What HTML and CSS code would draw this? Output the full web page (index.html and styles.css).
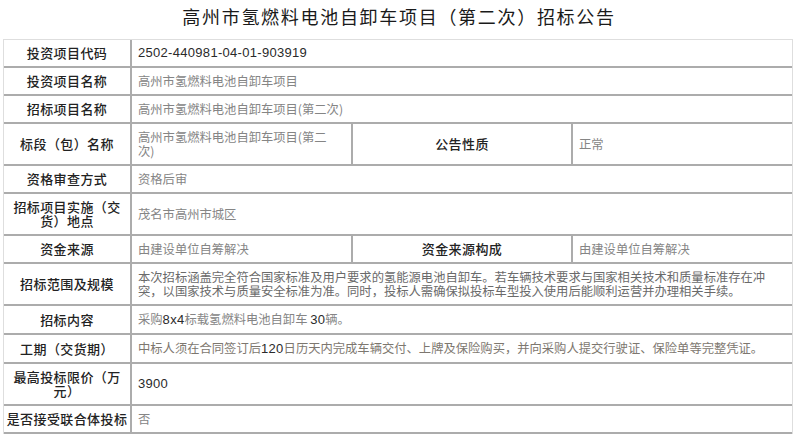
FILE: index.html
```html
<!DOCTYPE html>
<html lang="zh-CN">
<head>
    <meta charset="UTF-8">
    <meta name="viewport" content="width=device-width, initial-scale=1.0">
    <title>高州市氢燃料电池自卸车项目（第二次）招标公告</title>
    <link rel="stylesheet" href="styles.css">
</head>
<body>

    <div class="notice">
        <h1>高州市氢燃料电池自卸车项目（第二次）招标公告</h1>

        <table class="info">
            <colgroup>
                <col class="c1">
                <col class="c2">
                <col class="c3">
                <col class="c4">
            </colgroup>
            <tr>
                <th>投资项目代码</th>
                <td colspan="3" class="num">2502-440981-04-01-903919</td>
            </tr>
            <tr>
                <th>投资项目名称</th>
                <td colspan="3">高州市氢燃料电池自卸车项目</td>
            </tr>
            <tr>
                <th>招标项目名称</th>
                <td colspan="3">高州市氢燃料电池自卸车项目(第二次)</td>
            </tr>
            <tr>
                <th>标段（包）名称</th>
                <td>高州市氢燃料电池自卸车项目(第二次)</td>
                <th>公告性质</th>
                <td>正常</td>
            </tr>
            <tr>
                <th>资格审查方式</th>
                <td colspan="3">资格后审</td>
            </tr>
            <tr>
                <th>招标项目实施（交货）地点</th>
                <td colspan="3">茂名市高州市城区</td>
            </tr>
            <tr>
                <th>资金来源</th>
                <td>由建设单位自筹解决</td>
                <th>资金来源构成</th>
                <td>由建设单位自筹解决</td>
            </tr>
            <tr>
                <th>招标范围及规模</th>
                <td colspan="3" class="dark">本次招标涵盖完全符合国家标准及用户要求的氢能源电池自卸车。若车辆技术要求与国家相关技术和质量标准存在冲突，以国家技术与质量安全标准为准。同时，投标人需确保拟投标车型投入使用后能顺利运营并办理相关手续。</td>
            </tr>
            <tr>
                <th>招标内容</th>
                <td colspan="3">采购<span class="num">8x4</span>标载氢燃料电池自卸车 <span class="num">30</span>辆。</td>
            </tr>
            <tr>
                <th>工期（交货期）</th>
                <td colspan="3" class="warm">中标人须在合同签订后<span class="num">120</span>日历天内完成车辆交付、上牌及保险购买，并向采购人提交行驶证、保险单等完整凭证。</td>
            </tr>
            <tr>
                <th>最高投标限价（万元）</th>
                <td colspan="3" class="num">3900</td>
            </tr>
            <tr>
                <th>是否接受联合体投标</th>
                <td colspan="3">否</td>
            </tr>
        </table>
    </div>

</body>
</html>
```

FILE: styles.css
```css
body {
    margin: 0;
    padding: 0;
    background: #fff;
    font-family: "Noto Sans CJK SC", sans-serif;
}
.notice {
    padding: 4px 0 0 3px;
}
h1 {
    margin: 0 0 11px 0;
    font-size: 18px;
    line-height: 24px;
    font-weight: normal;
    letter-spacing: 1.7px;
    text-align: center;
    color: #1a1a1a;
}
.info {
    width: 790px;
    table-layout: fixed;
    border-collapse: separate;
    border-spacing: 0;
    border: 1px solid #dedede;
}
.info col.c1 { width: 126px; }
.info col.c2 { width: 221px; }
.info col.c3 { width: 220px; }
.info col.c4 { width: 221px; }
.info th,
.info td {
    border-bottom: 2px solid #acacac;
    border-left: 2px solid #acacac;
    line-height: 14px;
    vertical-align: middle;
}
.info th:first-child {
    border-left: none;
}
.info th {
    padding: 6px 2px;
    font-size: 13px;
    font-weight: 500;
    letter-spacing: 0.4px;
    color: #222;
    text-align: center;
}
.info td {
    padding: 6px 12px 6px 6px;
    font-size: 12.3px;
    color: #858585;
    text-align: left;
}
.info td.dark {
    color: #6a6a6a;
}
.info td.warm {
    color: #7d776f;
}
.info .num {
    font-family: "Liberation Sans", Arial, sans-serif;
    font-size: 13px;
    letter-spacing: 0.3px;
    color: #2a2a2a;
}
```
